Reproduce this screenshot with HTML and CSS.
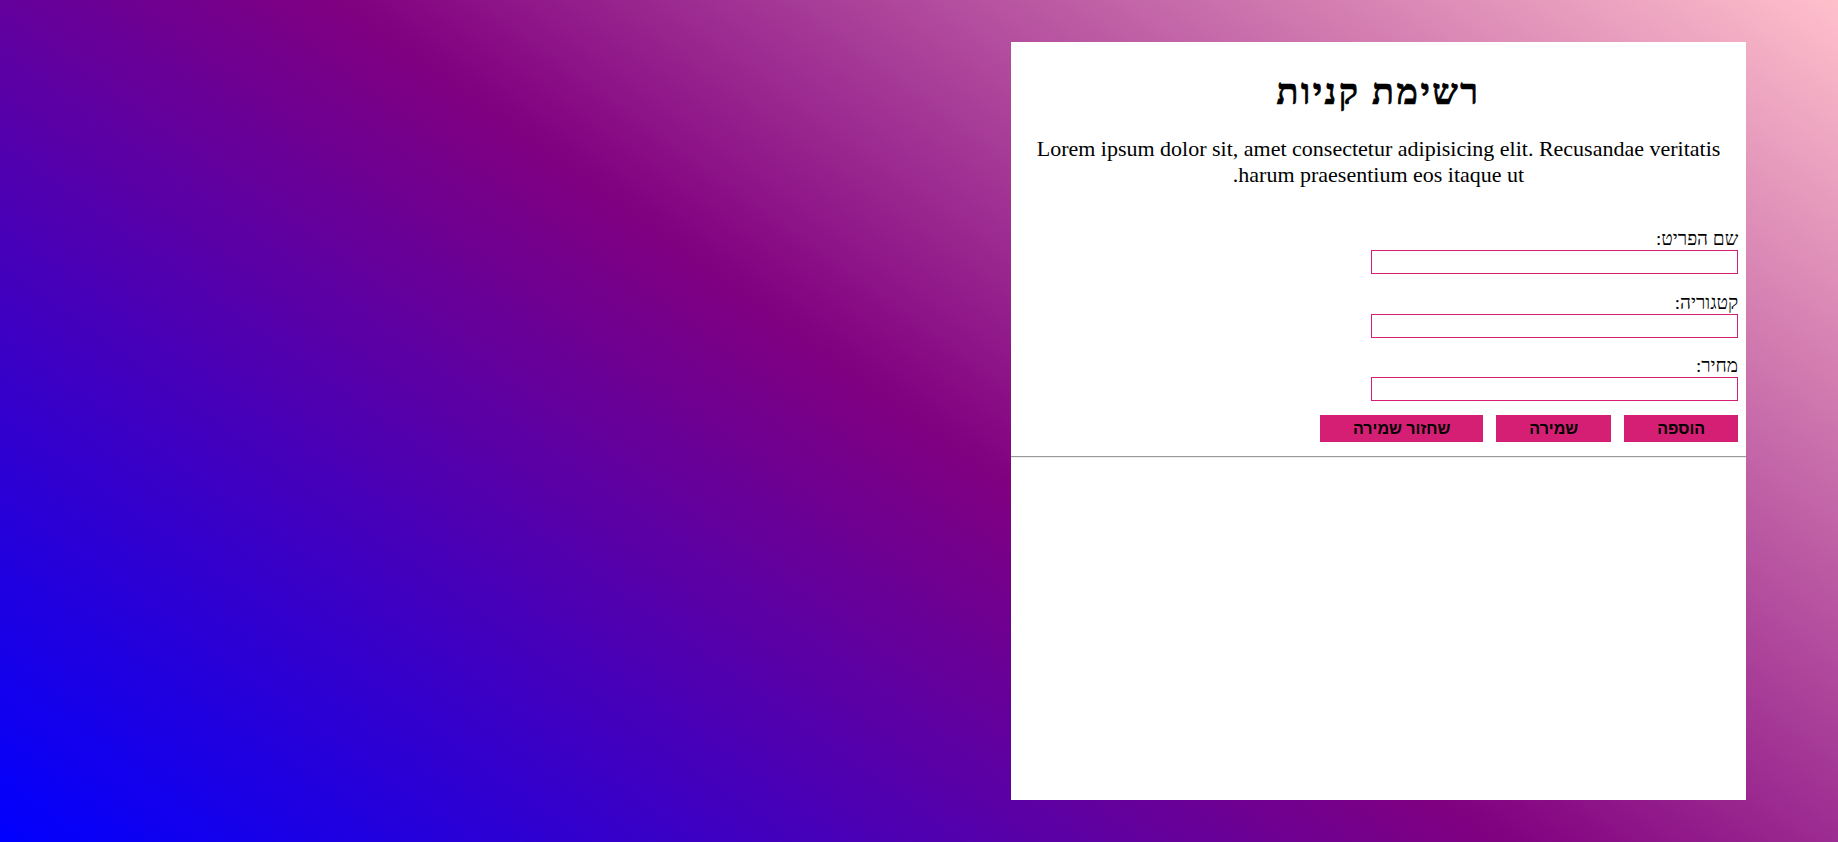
FILE: index.html
```html
<!DOCTYPE html>
<html lang="he" dir="rtl">
<head>
<meta charset="utf-8">
<title>רשימת קניות</title>
<link rel="stylesheet" href="styles.css">
</head>
<body>
<main class="page">
  <section class="panel">
    <header class="intro">
      <h1 class="title">רשימת קניות</h1>
      <p class="lead">Lorem ipsum dolor sit, amet consectetur adipisicing elit. Recusandae veritatis harum praesentium eos itaque ut.</p>
    </header>
    <form class="item-form">
      <div class="field">
        <label class="field-label" for="name">שם הפריט:</label>
        <input class="field-input" id="name" type="text">
      </div>
      <div class="field">
        <label class="field-label" for="category">קטגוריה:</label>
        <input class="field-input" id="category" type="text">
      </div>
      <div class="field">
        <label class="field-label" for="price">מחיר:</label>
        <input class="field-input" id="price" type="text">
      </div>
      <div class="actions">
        <button class="btn" type="button">הוספה</button>
        <button class="btn" type="button">שמירה</button>
        <button class="btn" type="button">שחזור שמירה</button>
      </div>
    </form>
    <hr class="divider">
    <ul class="items"></ul>
  </section>
</main>
</body>
</html>
```
FILE: styles.css
```css
html {
  min-height: 100%;
  background: linear-gradient(36deg, #0000ff 0%, #800080 50%, #ffc0cb 100%);
}

body {
  margin: 0;
  font-family: "Liberation Serif", "Times New Roman", serif;
  color: #000;
}

.page {
  display: flex;
  height: 100vh;
}

.panel {
  width: 40vw;
  height: 90vh;
  margin: 5vh 5vw;
  background: #fff;
  display: flex;
  flex-direction: column;
}

.intro {
  padding: 8px 8px 0;
  text-align: center;
}

.title {
  font-size: 36px;
  line-height: 40px;
  letter-spacing: 2.5px;
  font-weight: bold;
  -webkit-text-stroke: 0.7px #000;
  margin: 22px 0 24px;
}

.lead {
  font-size: 22px;
  margin: 0;
}

.item-form {
  padding: 39px 8px 0;
  display: flex;
  flex-direction: column;
}

.field {
  display: flex;
  flex-direction: column;
  align-items: flex-start;
}

.field + .field {
  margin-top: 16.5px;
}

.field-label {
  font-size: 19px;
  line-height: 23px;
}

.field-input {
  box-sizing: border-box;
  width: 51%;
  height: 24px;
  border: 1px solid #d51f75;
  padding: 1px 2px;
  background: #fff;
  outline: none;
}

.actions {
  display: flex;
  gap: 13px;
  margin-top: 14px;
}

.btn {
  font-family: "Liberation Sans", Arial, sans-serif;
  font-weight: bold;
  font-size: 16px;
  height: 27px;
  padding: 0 33px;
  border: none;
  background: #d51f75;
  color: #000;
}

.divider {
  margin: 14px 0 0;
  border: none;
  border-top: 1px solid #9a9a9a;
  border-bottom: 1px solid #eeeeee;
  height: 0;
  width: 100%;
}

.items {
  margin: 0;
  padding: 0;
  list-style: none;
}
```
